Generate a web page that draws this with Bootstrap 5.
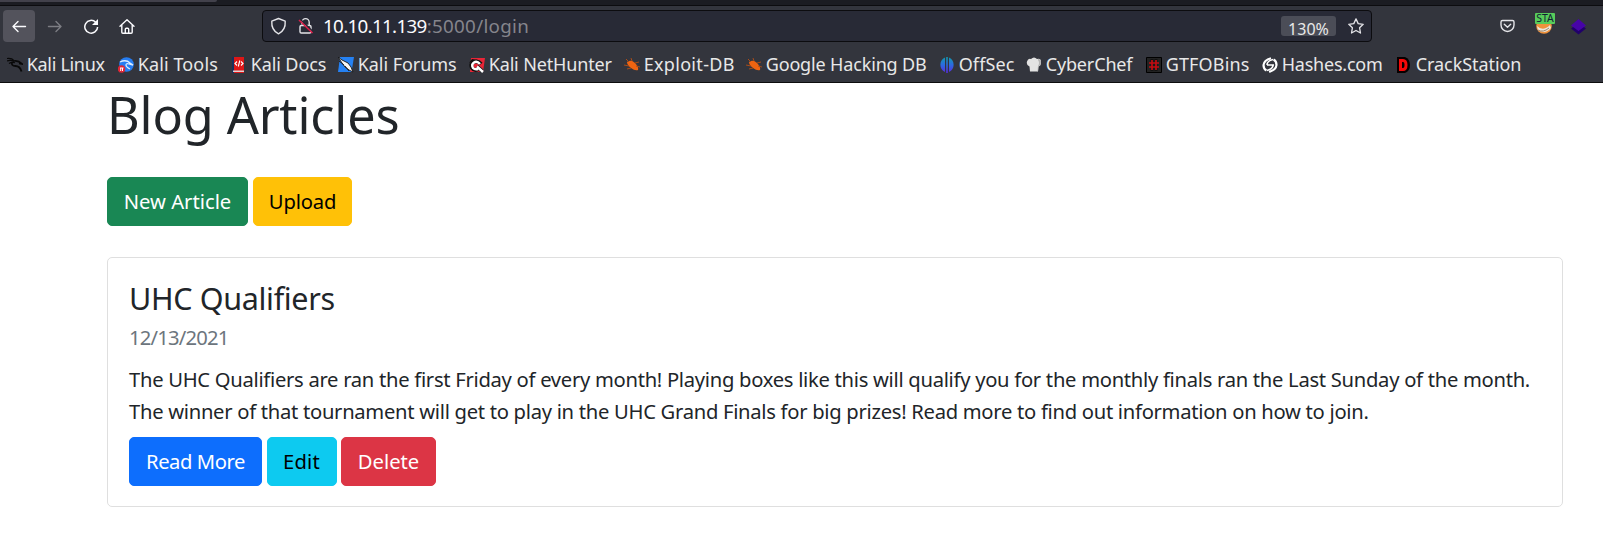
<!DOCTYPE html>
<html lang="en">
<head>
<meta charset="utf-8">
<meta name="viewport" content="width=device-width, initial-scale=1">
<title>Blog Articles</title>
<link href="https://cdn.jsdelivr.net/npm/bootstrap@5.3.0/dist/css/bootstrap.min.css" rel="stylesheet">
<style>
  body { font-family: "Noto Sans", sans-serif; font-size: 20.2px; overflow: hidden; color: #212529; }

  /* browser chrome */
  .chrome { height: 83px; background: #33353d; border-bottom: 1px solid #0c0c0d; color: #e8e8e8; }
  .tabstrip { height: 6px; background: #1b1c22; border-bottom: 1px solid #0c0c0f; }
  .tab-edge { width: 217px; height: 2px; background: #42414b; border-radius: 0 0 3px 0; }
  .toolbar { height: 41px; padding: 4px 0 0 3px; }
  .tool { width: 32px; height: 32px; border-radius: 4px; display: flex; align-items: center; justify-content: center; margin-right: 4px; }
  .tool-back { background: #53535c; }
  .urlbar { width: 1110px; height: 32px; margin-left: 115px; background: #282a36; border: 1px solid #0c0c0f; border-radius: 4px; padding: 0 7px; font-size: 18.8px; line-height: 31px; }
  .host { color: #fbfbfe; letter-spacing: -.68px; margin-left: 5px; }
  .rest { color: #85858c; letter-spacing: .3px; }
  .lock { margin: 0 2px 0 9px; }
  .zoom-level { width: 55px; height: 20px; background: #4b4d57; border-radius: 3px; font-size: 16px; line-height: 26px; text-align: center; margin-right: 12px; }
  .extensions { margin-left: 128px; gap: 15px; }
  .ext { position: relative; width: 20px; height: 32px; display: flex; align-items: center; }
  .ext-tag { position: absolute; top: 3px; left: 0; width: 20px; height: 11px; background: #58cc5b; color: #123; font-size: 10.5px; line-height: 11px; text-align: center; border-radius: 1px; }

  /* bookmarks */
  .bookmarks { height: 35px; padding-left: 7px; font-size: 18px; line-height: 35px; white-space: nowrap; }
  .bookmarks > div { flex: none; display: flex; align-items: center; gap: 3.700px; width: var(--w); letter-spacing: var(--ls); }
  .bookmarks svg { flex: none; }
  .bookmarks > :nth-child(1) { --w: 111px; --ls: -.3px; }
  .bookmarks > :nth-child(2) { --w: 113px; --ls: .12px; }
  .bookmarks > :nth-child(3) { --w: 107px; --ls: -.11px; }
  .bookmarks > :nth-child(4) { --w: 131px; --ls: -.04px; }
  .bookmarks > :nth-child(5) { --w: 155px; --ls: -.15px; }
  .bookmarks > :nth-child(6) { --w: 122px; --ls: .31px; }
  .bookmarks > :nth-child(7) { --w: 193px; --ls: -.15px; }
  .bookmarks > :nth-child(8) { --w: 87px; --ls: .1px; }
  .bookmarks > :nth-child(9) { --w: 120px; --ls: -.15px; }
  .bookmarks > :nth-child(10) { --w: 116px; --ls: .15px; }
  .bookmarks > :nth-child(11) { --w: 134px; --ls: -.22px; }
  .bookmarks > :nth-child(12) { --w: 140px; --ls: -.06px; }

  /* page */
  .page { padding: 1px 40px 0 107px; }
  .page h1 { font-size: 50.4px; line-height: 62px; letter-spacing: -.14px; font-weight: 400; margin: 0 0 31px; }
  .page .btn { height: 49px; padding: 0; font-size: 20.2px; line-height: 46px; border-radius: 5px; }
  .top-actions { gap: 5px; }
  .card-actions { gap: 4.500px; }
  .btn-new { width: 141px; } .btn-upload { width: 99px; letter-spacing: -.18px; }
  .btn-more { width: 133px; letter-spacing: -.42px; } .btn-edit { width: 70px; letter-spacing: .2px; } .btn-del { width: 95px; }
  .article { margin-top: 31px; height: 250px; border: 1px solid #dfdfdf; border-radius: 5px; padding: 20px 21px 0; }
  .article h5 { font-size: 30.5px; line-height: 40px; letter-spacing: -.33px; font-weight: 400; margin: 0; }
  .article-date { font-size: 20.2px; line-height: 32px; letter-spacing: -.8px; color: #6c757d; margin: 3px 0 10px; }
  .article-text { line-height: 32px; letter-spacing: -.285px; margin: 0 0 10px; white-space: nowrap; }
</style>
</head>
<body>
<header class="chrome">
  <div class="tabstrip"><div class="tab-edge"></div></div>
  <div class="toolbar d-flex">
    <div class="tool tool-back"><svg width="16" height="16" fill="none" stroke="#fbfbfe" stroke-width="1.4" stroke-linecap="round" stroke-linejoin="round"><path d="M14.5 8.5H2M7 3.5l-5 5 5 5"/></svg></div>
    <div class="tool"><svg width="16" height="16" fill="none" stroke="#7c7d83" stroke-width="1.4" stroke-linecap="round" stroke-linejoin="round"><path d="M1.5 8.5H14M9 3.5l5 5-5 5"/></svg></div>
    <div class="tool"><svg width="16" height="16" fill="none" stroke="#fbfbfe" stroke-width="1.5"><path d="M12.7 4.2a6.4 6.4 0 1 0 1.9 4.8"/><path d="M15 1v6H9z" fill="#fbfbfe" stroke="none"/></svg></div>
    <div class="tool"><svg width="16" height="16" fill="none" stroke="#fbfbfe" stroke-width="1.4" stroke-linejoin="round" stroke-linecap="round"><path d="M1 8.3l7-6.6 7 6.6M2.8 7v7.2q0 1 1 1h8.4q1 0 1-1V7M6.3 15v-3.8q0-1 1-1h1.4q1 0 1 1V15"/></svg></div>
    <div class="urlbar d-flex align-items-center">
      <svg width="17" height="18" fill="none" stroke="#e4e4e8" stroke-width="1.4" stroke-linejoin="round"><path d="M8.5 1.5l6.7 2.7c.4 5.5-1.5 10-6.7 12.6C3.300 14.200 1.400 9.700 1.800 4.200z"/></svg>
      <svg class="lock" width="20" height="18" fill="none" stroke="#e4e4e8" stroke-width="1.4"><path d="M6 7.500V5.200a3.600 3.600 0 0 1 7.200 0V8.500"/><rect x="4" y="8.500" width="11" height="7.500" rx="1.300"/><path d="M4 2l13.500 13" stroke="#282a36" stroke-width="1.500"/><path d="M3 3l13.500 13" stroke="#dc1d48" stroke-width="1.600"/></svg>
      <span class="host">10.10.11.139</span><span class="rest">:5000/login</span>
      <div class="zoom-level ms-auto">130%</div>
      <svg width="16" height="16" fill="none" stroke="#e4e4e8" stroke-width="1.3" stroke-linejoin="round"><path d="M8 .9l2.200 4.700 5 .7-3.600 3.500.9 5.200L8 12.500 3.500 15l.9-5.200L.8 6.300l5-.7z"/></svg>
    </div>
    <div class="extensions d-flex">
      <div class="ext"><svg width="16" height="16" fill="none" stroke="#e4e4e8" stroke-width="1.400" stroke-linecap="round" stroke-linejoin="round"><path d="M2.500 2.500h10q1.500 0 1.500 1.500v3a6.400 6.400 0 0 1-13 0V4q0-1.500 1.500-1.500zM4.300 6.300l3.200 3 3.200-3"/></svg></div>
      <div class="ext"><svg width="20" height="18"><circle cx="9" cy="9" r="7.800" fill="#f0923c"/><path d="M2 9q6 6 13-1l1 3q-6 7-13 2z" fill="#eee7dc"/><path d="M3 13q5 3 11-2" fill="none" stroke="#9b8771"/></svg><span class="ext-tag">STA</span></div>
      <div class="ext"><svg width="17" height="17"><path d="M1 10.500L8.500 5l7.500 5.500-7.500 6z" fill="#21006b"/><path d="M1 7.500L8.500 1 16 7.500 8.500 13z" fill="#4704a8"/></svg></div>
    </div>
  </div>
  <nav class="bookmarks d-flex">
    <div><svg width="16" height="16" fill="none" stroke="#090909" stroke-width="1.200"><path d="M0 1.500q5-.5 7 2M0 4q4-1.500 7 .5M2 6.500q3-2 6-.7"/><path d="M5 5q-1 4 3.500 4t6 5.500M7 4q4-1 8 3l-3-.6" stroke-width="1.800"/></svg>Kali Linux</div>
    <div><svg width="16" height="16"><circle cx="8.500" cy="7.500" r="7.300" fill="#267df2"/><path d="M2 5q6-3 10 1l3 2-4-1q-3-1-3 1t4 4" fill="none" stroke="#dcecff" stroke-width="1.300"/><circle cx="3.500" cy="12" r="3.700" fill="#df2636"/><path d="M2 11h3.500M2.700 11v3M4.500 11v3" stroke="#fff"/></svg>Kali Tools</div>
    <div><svg width="16" height="16"><path d="M1 0h12v16H1z" fill="#dd1717"/><path d="M1 0h2v16H1z" fill="#17305e"/><path d="M2 13.500h11v1.500H2z" fill="#ded4d4"/><path d="M6 4.500L4 6.500l2 2M10 4.500l2 2-2 2M8.800 3.500l-1.500 6" fill="none" stroke="#fff" stroke-width="1.100"/></svg>Kali Docs</div>
    <div><svg width="16" height="16"><path d="M2 0h14l-2.500 15H0z" fill="#2581f3"/><path d="M0 0l4 3 6 3 3 4 2 5-4-2-4-3-3-4z" fill="#f6f6f6" stroke="#181818" stroke-width=".9"/><path d="M1 4l5 4M7 9l4 5" stroke="#181818" stroke-width=".9"/></svg>Kali Forums</div>
    <div><svg width="16" height="16"><path d="M2 1h14l-2 14H1z" fill="#e92537"/><path d="M0 6l3-4 6 1-4 1z" fill="#111"/><path d="M13 14L8 9.500M12 7Q9 3.500 5 5T3 11q2 3 6 1.500" fill="none" stroke="#111" stroke-width="4"/><path d="M14 15L8 9.500M11 7Q8 3.500 5 5.500T4 11q2 2 5 1" fill="none" stroke="#fff" stroke-width="2.400"/></svg>Kali NetHunter</div>
    <div><svg width="16" height="16"><path d="M3 5q4-3 8 1t3 7q-3 1-7-2T3 5z" fill="#ef6411"/><path d="M5 5L2 2M8 4L7 1M11 6l4-1M5 9L0 8M7 11l-4 1M12 9l4 1" stroke="#a94c19"/></svg>Exploit-DB</div>
    <div><svg width="16" height="16"><path d="M3 5q4-3 8 1t3 7q-3 1-7-2T3 5z" fill="#ef6411"/><path d="M5 5L2 2M8 4L7 1M11 6l4-1M5 9L0 8M7 11l-4 1M12 9l4 1" stroke="#a94c19"/></svg>Google Hacking DB</div>
    <div><svg width="16" height="16"><defs><linearGradient id="os" x2="0" y2="1"><stop stop-color="#119bad"/><stop offset=".5" stop-color="#2c6ae0"/><stop offset="1" stop-color="#592adc"/></linearGradient></defs><path d="M6 .5v14.500a8 8 0 0 1 0-14.500zM10 .5v14.500a8 8 0 0 0 0-14.500zM7.200 0h1.600v16H7.200z" fill="url(#os)"/></svg>OffSec</div>
    <div><svg width="16" height="16"><path d="M3.500 9.500Q0 8 1 4.500T5 2q3-3 6 0 4-1 4 3t-2.500 4.500l-.5 5H4z" fill="#e3e3e3"/><path d="M12 3q2 3 0 6l-.5 5.500H12l.5-5Q15 8 15 5t-3-3z" fill="#b5b5b5"/></svg>CyberChef</div>
    <div><svg width="16" height="16"><path d="M.5.500h15v15H.5z" fill="#222" stroke="#000"/><path d="M6 2v12M10 2v12" stroke="#111" stroke-width="3"/><path d="M6 3v10M10 3v10M3 6h10M3 10h10" stroke="#c30d12" stroke-width="1.700"/></svg>GTFOBins</div>
    <div><svg width="16" height="16" fill="none" stroke="#fff"><path d="M9 1.200Q2 3 1.500 8q0 4 3 5.500M7 14.800Q14 13 14.500 8q0-4-3-5.500" stroke-width="2.200"/><path d="M5 8h7M11 2.500Q5 4 5 8M11 8q0 4-6 5.500" stroke-width="1.600"/></svg>Hashes.com</div>
    <div><svg width="16" height="16"><path d="M1 0h8q5 2 5 8t-5 8H1z" fill="#080000"/><path d="M4.500 3.500H7q3 0 3 4.500t-3 4.500H4.500z" fill="none" stroke="#f50909" stroke-width="3"/></svg>CrackStation</div>
  </nav>
</header>
<main class="page">
  <h1>Blog Articles</h1>
  <div class="top-actions d-flex">
    <a class="btn btn-success btn-new">New Article</a>
    <a class="btn btn-warning btn-upload">Upload</a>
  </div>
  <article class="article">
    <h5>UHC Qualifiers</h5>
    <p class="article-date">12/13/2021</p>
    <p class="article-text">The UHC Qualifiers are ran the first Friday of every month! Playing boxes like this will qualify you for the monthly finals ran the Last Sunday of the month.<br>The winner of that tournament will get to play in the UHC Grand Finals for big prizes! Read more to find out information on how to join.</p>
    <div class="card-actions d-flex">
      <a class="btn btn-primary btn-more">Read More</a>
      <a class="btn btn-info btn-edit">Edit</a>
      <a class="btn btn-danger btn-del">Delete</a>
    </div>
  </article>
</main>
<script src="https://cdn.jsdelivr.net/npm/bootstrap@5.3.0/dist/js/bootstrap.bundle.min.js"></script>
</body>
</html>
